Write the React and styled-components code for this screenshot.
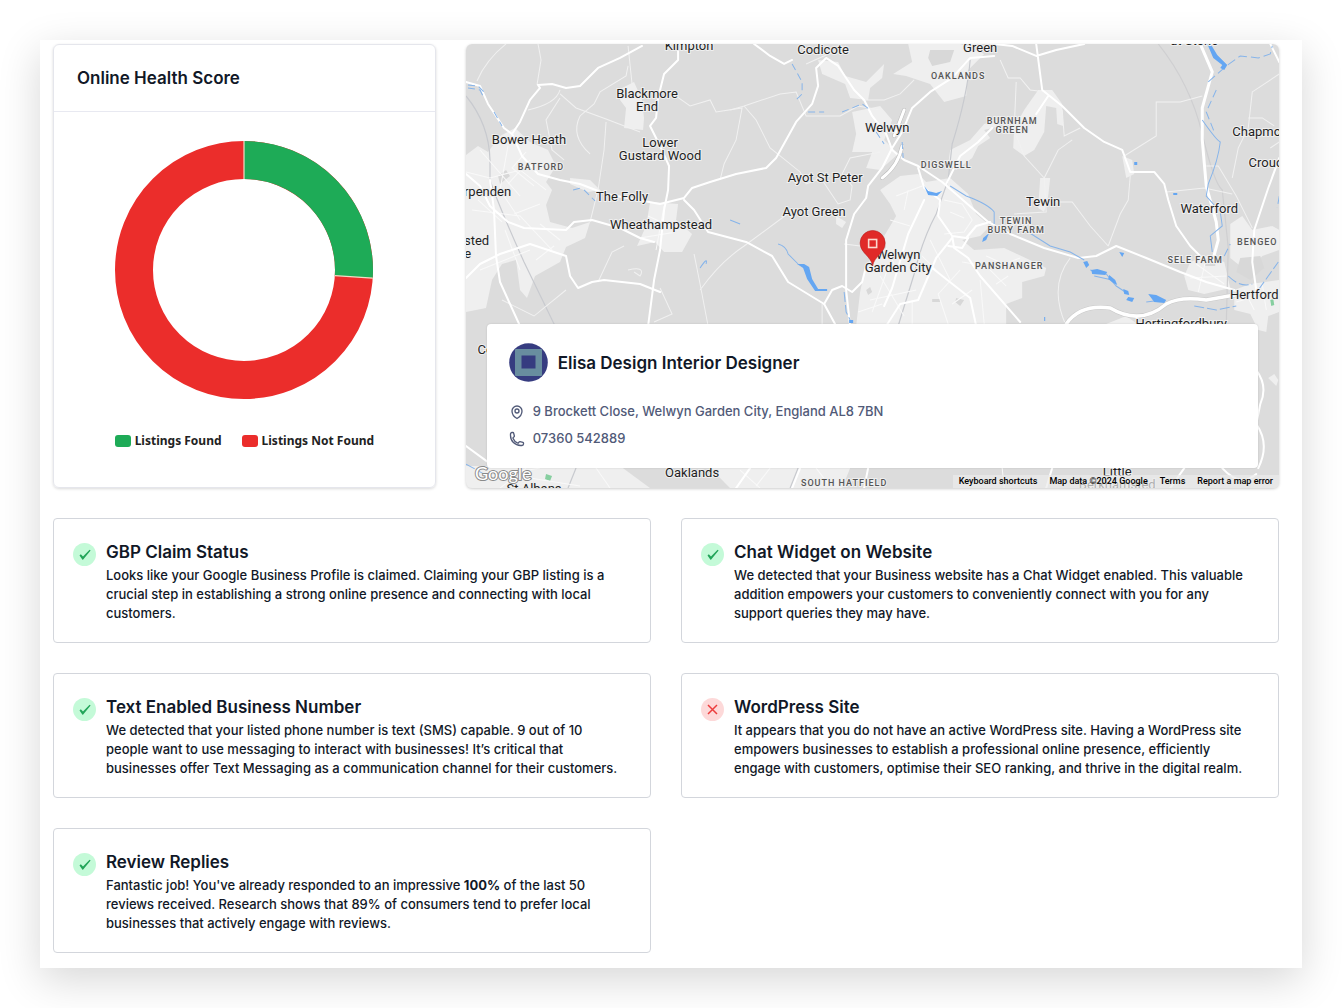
import styled, { createGlobalStyle } from 'styled-components';
import { HiOutlineMapPin, HiOutlinePhone } from 'react-icons/hi2';

const towns = [
  [689, 50, ['Kimpton']],
  [823, 54, ['Codicote']],
  [980, 52, ['Green']],
  [1194, 45, ['at Stone']],
  [647, 98, ['Blackmore', 'End']],
  [529, 144, ['Bower Heath']],
  [660, 147, ['Lower', 'Gustard Wood']],
  [887, 132, ['Welwyn']],
  [825, 182, ['Ayot St Peter']],
  [814, 216, ['Ayot Green']],
  [622, 201, ['The Folly']],
  [661, 229, ['Wheathampstead']],
  [484, 196, ['arpenden']],
  [473, 245, ['nsted']],
  [464, 258, ['ne']],
  [1043, 206, ['Tewin']],
  [1209, 213, ['Waterford']],
  [1262, 136, ['Chapmore']],
  [1269, 167, ['Crouch']],
  [1254, 299, ['Hertford']],
  [1181, 328, ['Hertingfordbury']],
  [898, 259, ['Welwyn', 'Garden City']],
  [487, 354, ['Col']],
  [692, 477, ['Oaklands']],
  [534, 493, ['St Albans']],
  [1117, 476, ['Little', 'Berkhamsted']],
];

const suburbs = [
  [958, 79, ['OAKLANDS']],
  [1012, 124, ['BURNHAM', 'GREEN']],
  [541, 170, ['BATFORD']],
  [946, 168, ['DIGSWELL']],
  [1016, 224, ['TEWIN', 'BURY FARM']],
  [1009, 269, ['PANSHANGER']],
  [1195, 263, ['SELE FARM']],
  [1257, 245, ['BENGEO']],
  [844, 486, ['SOUTH HATFIELD']],
];

const checks = [
  {
    title: 'GBP Claim Status',
    passed: true,
    text: 'Looks like your Google Business Profile is claimed. Claiming your GBP listing is a crucial step in establishing a strong online presence and connecting with local customers.',
  },
  {
    title: 'Chat Widget on Website',
    passed: true,
    text: 'We detected that your Business website has a Chat Widget enabled. This valuable addition empowers your customers to conveniently connect with you for any support queries they may have.',
  },
  {
    title: 'Text Enabled Business Number',
    passed: true,
    text: 'We detected that your listed phone number is text (SMS) capable. 9 out of 10 people want to use messaging to interact with businesses! It’s critical that businesses offer Text Messaging as a communication channel for their customers.',
  },
  {
    title: 'WordPress Site',
    passed: false,
    text: 'It appears that you do not have an active WordPress site. Having a WordPress site empowers businesses to establish a professional online presence, efficiently engage with customers, optimise their SEO ranking, and thrive in the digital realm.',
  },
  {
    title: 'Review Replies',
    passed: true,
    text: (
      <>
        Fantastic job! You've already responded to an impressive <strong>100%</strong> of the last
        50 reviews received. Research shows that 89% of consumers tend to prefer local businesses
        that actively engage with reviews.
      </>
    ),
  },
];

const Donut = ({ found }) => {
  const angle = found * 2 * Math.PI;
  const x = Math.sin(angle);
  const y = -Math.cos(angle);
  return (
    <DonutSvg viewBox='-130 -130 260 260' role='img' aria-label='Listings found and not found'>
      <circle r='110' fill='none' stroke='#eb2d2b' strokeWidth='38' />
      <path
        d={`M0 -110 A110 110 0 ${found > 0.5 ? 1 : 0} 1 ${110 * x} ${110 * y}`}
        fill='none'
        stroke='#1eab57'
        strokeWidth='38'
      />
      <path
        d={`M0 -91V-129M${91 * x} ${91 * y}L${129 * x} ${129 * y}`}
        stroke='#f3dcc4'
        strokeWidth='1.2'
      />
    </DonutSvg>
  );
};

const Labels = ({ items, lineHeight }) =>
  items.map(([x, y, lines]) => (
    <text key={lines[0] + y} x={x} y={y}>
      {lines.map((line, i) => (
        <tspan key={line} x={x} dy={i ? lineHeight : 0}>
          {line}
        </tspan>
      ))}
    </text>
  ));

const Map = () => (
  <MapSvg viewBox='466 44 813 444' preserveAspectRatio='xMidYMid slice' aria-label='Map'>
    <rect x='466' y='44' width='813' height='444' fill='#dcdcdc' />

    {/* built-up areas */}
    <g fill='#efefef'>
      <path d='M466 155L478 146L488 152L500 136L515 128L530 142L548 150L556 166L546 182L552 190L546 205L550 222L572 228L590 222L585 238L566 247L560 262L535 276L527 298L520 290L516 260L502 264L492 280L486 308L466 312Z' />
      <path d='M622 88L634 82L642 100L644 118L643 130L624 128L626 108L620 100Z' />
      <path d='M650 202L678 204L676 220L692 234L682 252L664 252L655 242L637 246L646 226Z' />
      <path d='M570 178L590 180L600 190L588 192L570 184Z' />
      <path d='M818 60L838 62L845 76L866 82L884 64L882 78L870 88L868 100L850 98L845 84L822 74Z' />
      <path d='M852 112L880 106L892 120L884 140L898 154L880 170L866 168L872 152L852 152L856 134Z' />
      <path d='M908 44L960 44L984 54L968 70L966 96L944 102L930 84L906 76L893 74L912 62Z' />
      <path d='M1038 90L1052 90L1062 104L1063 126L1057 124L1056 108L1046 106L1044 132L1034 150L1024 156L1013 148L1014 128L1024 110Z' />
      <path d='M1000 126L984 130L990 138L978 146L972 158L956 170L948 164L950 150L970 140L984 124L996 120Z' />
      <path d='M880 190L900 176L918 174L926 182L950 178L968 194L976 214L990 226L980 236L962 240L974 250L1004 248L1034 262L1046 268L1044 276L1022 282L1022 298L1006 304L1006 326H856L860 292L866 264L886 248L884 236L896 216L890 204Z' />
      <path d='M1040 178L1050 178L1048 196L1044 212L1038 208Z' />
      <path d='M1190 262L1206 256L1224 262L1230 288L1204 294L1188 290L1184 276Z' />
      <path d='M1230 224L1242 216L1252 230L1272 226L1279 230V250L1262 256L1254 266H1240L1230 258Z' />
      <path d='M1234 290L1250 284L1279 280V312L1268 316L1266 332L1258 330L1250 314L1234 310Z' />
      <path d='M466 466H620L650 488H466Z' />
      <path d='M710 468H850L842 488H730Z' />
      <path d='M1106 324L1126 316L1140 326Z' />
      <path d='M1122 156L1132 160L1134 174L1126 178Z' />
      <path d='M836 216L846 222L842 228L836 224Z' />
      <path d='M1268 378l6 -4 4 6 -2 6z' />
    </g>
    <g fill='#d8d8d8'>
      <path d='M498 176l8 -6 4 6 -10 8zM932 299h8v3h-8zM1205 258h10v8h-10zM956 298l8 2 -4 6 -5 -4zM866 290l4 -3 2 5 -4 3zM930 50h24l-4 12 -18 4 -4 -8z' />
      <path d='M1240 258l20 -2 4 12 -14 12 -14 -8z' />
    </g>
    <g fill='#87cfa0'>
      <path d='M546 474l6 2 -2 5 -5 -2zM1270 300l3 -1 1 6 -3 1z' />
    </g>

    {/* railways */}
    <g fill='none' stroke='#c8cacf' strokeWidth='1.2'>
      <path d='M466 96Q489 124 490 160L490 180Q498 204 524 262L555 326' />
      <path d='M970 60Q967 96 952 144L948 180L936 214Q922 240 914 274L898 326' />
      <path d='M1158 44Q1190 84 1202 134T1222 190L1228 248L1226 326' stroke='#cfcfd1' />
      <path d='M576 468L568 488M798 468L790 488' />
    </g>

    {/* lanes */}
    <g fill='none' stroke='#f1f1f1' strokeWidth='1'>
      <path d='M506 44Q486 60 477 81M538 44L541 60L537 85' />
      <path d='M560 94L576 108L606 119L640 132M528 110Q556 104 560 90M628 66L626 76L600 92L594 104L580 116Q570 136 590 154M560 98L546 120L552 150L564 160' />
      <path d='M606 122L604 150L598 190L590 222M628 46L632 84M670 92L690 106L710 100L716 112L742 108L736 140L724 164L720 180' />
      <path d='M730 110L744 106L756 120L770 148L780 156L800 172L806 184L822 178M744 106L780 94L796 92L806 116L840 116L858 106L880 110' />
      <path d='M862 100L884 100L900 94L914 80M806 64L846 46M822 180L830 192L838 204L850 200L852 186L842 174L850 158L880 152' />
      <path d='M1000 60L1008 78L1020 78L1030 90L1046 92M1016 82L1014 130L1024 156L1044 178M1062 110L1064 136L1080 128M1072 140L1058 150L1044 178L1046 212L1014 214' />
      <path d='M1044 202L1072 202L1090 226L1108 246M1124 156L1156 136L1156 102L1180 102L1202 96M1130 176L1128 200L1120 214L1108 246M1166 192L1204 188L1232 194' />
      <path d='M1206 166L1218 166L1236 196L1252 228M1279 74L1252 92L1248 128L1238 148L1232 178M1248 118L1262 118L1274 126M1270 148L1279 142' />
      <path d='M598 282L612 252L624 246M628 270Q646 266 640 276L634 272M660 288L672 314L654 322M694 254L700 284L708 326M700 290Q720 262 744 246L790 212' />
      <path d='M502 300L534 316L566 290M1070 258Q1048 286 1066 326M844 244L876 248M822 304V326' />
    </g>

    {/* residential streets */}
    <g fill='none' stroke='#f9f9f9' strokeWidth='1'>
      <path d='M466 172L490 178L520 170L546 190M480 150L520 196M508 146L500 190M472 210L520 216L552 250M480 270L530 250M505 230L520 270M560 240L540 224' />
      <path d='M500 190l20 30M530 160l-22 24M526 152l-14 16 22 18M514 214l26 -10M478 200l24 22M536 260l18 -14M648 216l30 14M640 238l36 -6M656 250l8 -44' />
      <path d='M870 300l46 -10M880 276l24 40M890 262l-18 50M858 312l24 -8M886 248l10 20M930 240l20 40M962 262l24 4 20 20' />
      <path d='M960 270l-22 24 10 30M972 290l-20 14M980 280l4 44M890 220l20 6M896 196l26 -10M904 210l4 -20M944 200l18 4 10 16 -8 12 -20 2M950 212l14 6M986 256l18 8 16 -6M996 284l12 -8M912 326V300M938 272l-16 -16' />
      <path d='M1196 264l28 20M1190 278l36 -2M1206 258l-8 34M1244 290l10 20M1236 302l34 -10M1262 284l4 26' />
      <path d='M480 478l60 -10M500 488l26 -20M530 478l50 8M596 468l14 20M740 470l20 18M770 468l-14 18M816 468l14 18M1002 468l2 20' />
    </g>

    {/* main roads */}
    <g fill='none' stroke='#fff' strokeWidth='2' strokeLinejoin='round' strokeLinecap='round'>
      <path d='M466 82L480 86L488 104L504 128L512 134L520 122L530 100L540 88L538 85L552 84L566 88L580 86L598 68L620 58L642 46' />
      <path d='M512 134L522 156L538 174L560 180L580 184L606 194L660 204L684 198L692 188L710 182L736 174L766 168L776 158L796 122L812 104L818 86L816 68L826 58L838 66L854 90L864 100L872 116L886 134L892 150L904 160L918 166L942 182L988 222' />
      <path d='M678 46L678 60L664 74L658 98L656 118L650 126L660 146L669 166L668 190L664 210L660 250L654 280L648 326' />
      <path d='M466 174L480 186L490 206L508 222L524 228L566 230L574 222L592 220L620 228L640 238L654 242M684 200L694 210L708 232L746 242L772 256L788 282L824 304L836 326' />
      <path d='M490 180L494 210L496 256L500 282L520 326M466 278L480 264L500 254L530 244L566 256L570 276L578 288L592 282L604 280L640 284L660 292' />
      <path d='M994 56L970 58L952 78L930 92L912 108L902 132L892 148L882 168L868 186L866 198L854 214L846 240L846 290L850 326' />
      <path d='M754 44L770 56L784 64L792 60M994 44L1012 46L1036 56L1056 50L1084 44M1036 44L1042 90L1062 106L1084 128L1104 142L1122 150L1130 172L1154 172L1164 184L1168 200L1176 226L1190 246L1202 258' />
      <path d='M1048 96L1036 114M992 128L978 142L960 156L946 184' />
      <path d='M1200 44L1212 72L1202 108L1202 140L1206 186L1216 222L1218 240L1212 262' strokeWidth='3' />
      <path d='M988 222L1010 234L1044 248L1078 258L1096 256L1116 246L1146 258L1180 272L1206 282L1234 290' />
      <path d='M1279 158L1268 188L1254 230L1252 262L1256 290' />
      <path d='M1270 44L1279 62' />
      <path d='M918 168L924 188L940 200L938 216L952 236L954 248L968 258L980 276L1020 322M952 236L966 238L976 226L990 222M948 246L962 248L968 238' />
      <path d='M924 200L908 234L892 288L884 306M952 238L936 258L924 286L918 300L900 304L886 326M932 268L970 298L976 326' />
      <path d='M824 304L832 290L842 286L852 292L862 282L866 266' />
      <path d='M1066 324Q1080 304 1110 308Q1140 326 1166 304Q1180 296 1206 300L1240 294' stroke='#c9c9c9' strokeWidth='4.500' />
      <path d='M1066 324Q1080 304 1110 308Q1140 326 1166 304Q1180 296 1206 300L1240 294' strokeWidth='3.500' />
      <path d='M466 446L488 462M1256 370Q1268 386 1260 404L1256 424Q1270 444 1258 468M1222 468Q1240 488 1256 474' />
      <path d='M750 468L736 488M800 468L792 488M868 468L864 488M1052 468L1046 488M1184 468L1170 488' />
      <path d='M904 110L894 136M902 146Q898 166 882 178' stroke='#bbb' strokeWidth='4' />
      <path d='M904 110L894 136M902 146Q898 166 882 178' strokeWidth='3' />
    </g>

    {/* water */}
    <g fill='none' stroke='#86b4ea' strokeWidth='1'>
      <path d='M468 85L478 86L486 94M468 88L480 90L484 98M494 112L502 126M573 190l8 -2M584 190l6 6 5 5M792 64L802 82L802 94L796 100M808 112h16M842 112l20 -8 8 6M876 132l8 12M902 142l1 16' strokeDasharray='7 4' />
      <path d='M778 244Q786 246 788 254L798 264M706 264Q708 256 700 268M730 220l10 4' />
      <path d='M1208 82L1226 66L1240 56L1258 58L1270 54L1272 46' strokeDasharray='9 4' />
      <path d='M1202 120Q1216 140 1220 142Q1218 160 1208 184L1206 196L1220 212L1222 226L1210 236L1212 252' />
      <path d='M1216 90L1206 112L1214 132M1224 256l6 -12M1279 196l-2 12' strokeDasharray='8 4' />
      <path d='M950 186L966 196Q988 204 994 212V224M1028 232L1050 246L1070 252L1084 260' />
      <path d='M1228 276Q1240 288 1252 284M1258 290L1268 276L1278 262M1194 306L1216 310L1236 306M466 464L484 474M844 292L846 312L850 320' strokeDasharray='10 3' />
      <path d='M1090 270L1106 274L1116 286L1128 294M1094 276L1112 280M1146 302L1162 300' />
    </g>
    <g fill='#64a6f2'>
      <path d='M797 264h7l5 3 3 12 6 10h9v2h-12l-8 -12 -4 -11z' />
      <path d='M1207 44l4 1 6 10 10 10 -3 5 -4 -2 2 -3 -9 -7z' />
      <path d='M924 186l4 5 8 2 6 -2 -5 5 -9 -1zM983 238l6 -5 -3 7 -4 2z' />
      <path d='M1083 262l4 -1 2 4 -3 3zM1091 270l6 -1 10 3 -2 3 -13 -1zM1109 275l6 5 2 5 -4 -2 -5 -4z' />
      <path d='M1123 289l5 2 1 4 -5 -1zM1128 297l6 1 -2 4 -6 -2zM1148 294l8 1 10 5 -2 3 -10 -1z' />
      <path d='M1119 252l5 1 -2 4zM1134 162h3v3h-3zM1173 193h4v2h-4zM849 320h4v3h-4zM1044 317h1v4h-1z' />
    </g>

    <Towns>
      <Labels items={towns} lineHeight={13} />
    </Towns>
    <Suburbs>
      <Labels items={suburbs} lineHeight={9} />
    </Suburbs>

    <path
      d='M872.500 266C871 256 860 253 860 243A12.500 12.500 0 0 1 885 243C885 253 874 256 872.500 266Z'
      fill='#e02a28'
      stroke='#b91f1f'
      strokeWidth='0.6'
    />
    <rect x='868.500' y='239.500' width='8' height='8' fill='none' stroke='#fbd9cf' strokeWidth='1.600' />

    <GoogleMark x='475' y='480'>
      Google
    </GoogleMark>
  </MapSvg>
);

const StatusIcon = ({ passed }) => (
  <Badge $passed={passed}>
    <svg width='23' height='23' viewBox='0 0 23 23' fill='none' aria-hidden='true'>
      {passed ? (
        <path d='M6.500 12.400L7.800 11.300L10 13.600L16.600 6.800L17.600 7.600L10.200 16.600Q9.700 17 9.300 16.500Z' fill='#22a559' />
      ) : (
        <path d='M7 7L16 16M16 7L7 16' stroke='#ec3d3d' strokeWidth='1.500' />
      )}
    </svg>
  </Badge>
);

const App = () => (
  <>
    <GlobalStyle />
    <Page>
      <Sheet>
        <Overview>
          <ScoreCard>
            <ScoreHeader>
              <Heading>Online Health Score</Heading>
            </ScoreHeader>
            <ScoreBody>
              <Donut found={0.26} />
              <Legend>
                <LegendItem $color='#1eab57'>Listings Found</LegendItem>
                <LegendItem $color='#eb2d2b'>Listings Not Found</LegendItem>
              </Legend>
            </ScoreBody>
          </ScoreCard>

          <MapCard>
            <Map />
            <MapFooter>
              <MapButton type='button'>Keyboard shortcuts</MapButton>
              <span>Map data ©2024 Google</span>
              <a href='#terms'>Terms</a>
              <a href='#report'>Report a map error</a>
            </MapFooter>
            <BusinessCard>
              <BusinessName>
                <svg width='39' height='39' viewBox='0 0 39 39' aria-hidden='true'>
                  <circle cx='19.500' cy='19.500' r='19.300' fill='#363c80' />
                  <rect x='6' y='6' width='27' height='27' rx='1' fill='#688d9f' />
                  <rect x='12.500' y='12.500' width='14' height='13' fill='#363c80' />
                </svg>
                <Heading>Elisa Design Interior Designer</Heading>
              </BusinessName>
              <Contact>
                <HiOutlineMapPin size={16} aria-hidden='true' />
                9 Brockett Close, Welwyn Garden City, England AL8 7BN
              </Contact>
              <Contact>
                <HiOutlinePhone size={16} aria-hidden='true' />
                07360 542889
              </Contact>
            </BusinessCard>
          </MapCard>
        </Overview>

        <Checks>
          {checks.map(({ title, passed, text }) => (
            <CheckCard key={title}>
              <StatusIcon passed={passed} />
              <div>
                <Heading>{title}</Heading>
                <CheckText>{text}</CheckText>
              </div>
            </CheckCard>
          ))}
        </Checks>
      </Sheet>
    </Page>
  </>
);

export default App;

const GlobalStyle = createGlobalStyle`
  * {
    box-sizing: border-box;
  }
  body {
    margin: 0;
    background: #fff;
    color: #111827;
    font-family: Inter, sans-serif;
    font-size: 13px;
    font-weight: 500;
  }
`;

const Page = styled.main`
  padding: 40px;
`;

const Sheet = styled.div`
  padding: 4px 23px 15px 13px;
  background: #fff;
  box-shadow: 0 12px 40px rgba(0, 0, 0, 0.16);
`;

const Overview = styled.section`
  display: grid;
  grid-template-columns: 8fr 17fr;
  gap: 30px;
  margin-bottom: 30px;
`;

const ScoreCard = styled.article`
  display: flex;
  flex-direction: column;
  border: 1px solid #e5e6ec;
  border-radius: 6px;
  box-shadow: 0 1px 3px rgba(0, 0, 0, 0.15);
`;

const ScoreHeader = styled.header`
  padding: 20px 23px;
  border-bottom: 1px solid #e8e9f1;
`;

const Heading = styled.h2`
  margin: 0;
  font-size: 17px;
  font-weight: 600;
  line-height: 26px;
`;

const ScoreBody = styled.div`
  display: flex;
  flex: 1;
  flex-direction: column;
  align-items: center;
  padding: 28px 20px;
`;

const DonutSvg = styled.svg`
  width: 260px;
  height: 260px;
`;

const Legend = styled.ul`
  display: flex;
  gap: 20px;
  margin: 31px 0 0;
  padding: 0;
  list-style: none;
`;

const LegendItem = styled.li`
  display: flex;
  align-items: center;
  gap: 4px;
  color: #222;
  font-family: 'Noto Sans', sans-serif;
  font-size: 12px;
  font-weight: 700;
  line-height: 20px;
  white-space: nowrap;

  &::before {
    content: '';
    width: 16px;
    height: 12px;
    border-radius: 3px;
    background: ${({ $color }) => $color};
  }
`;

const MapCard = styled.article`
  position: relative;
  min-height: 444px;
  overflow: hidden;
  border-radius: 6px;
  box-shadow: 0 1px 3px rgba(0, 0, 0, 0.2);
`;

const MapSvg = styled.svg`
  position: absolute;
  inset: 0;
  width: 100%;
  height: 100%;
`;

const Towns = styled.g`
  fill: #1f1f1f;
  stroke: #efefef;
  stroke-width: 2px;
  paint-order: stroke;
  font-family: Roboto, sans-serif;
  font-size: 13px;
  font-weight: 400;
  text-anchor: middle;
`;

const Suburbs = styled.g`
  fill: #555;
  stroke: #efefef;
  stroke-width: 2px;
  paint-order: stroke;
  font-family: Roboto, sans-serif;
  font-size: 9px;
  font-weight: 500;
  letter-spacing: 1px;
  text-anchor: middle;
`;

const GoogleMark = styled.text`
  fill: #fff;
  stroke: #8a8a8a;
  stroke-width: 2px;
  paint-order: stroke;
  font-family: Lato, sans-serif;
  font-size: 18px;
  font-weight: 400;
`;

const MapFooter = styled.footer`
  position: absolute;
  right: 0;
  bottom: 0;
  display: flex;
  gap: 12px;
  padding: 0 6px;
  background: rgba(235, 235, 235, 0.7);
  color: #000;
  font-family: Roboto, sans-serif;
  font-size: 9px;
  line-height: 13px;

  a {
    color: inherit;
    text-decoration: none;
  }
`;

const MapButton = styled.button`
  padding: 0;
  border: 0;
  background: none;
  color: inherit;
  font: inherit;
  cursor: pointer;
`;

const BusinessCard = styled.div`
  position: absolute;
  right: 21px;
  bottom: 20px;
  left: 21px;
  padding: 19px 22px 16px;
  border-radius: 4px;
  background: #fff;
  box-shadow: 0 0 2px rgba(0, 0, 0, 0.15);
`;

const BusinessName = styled.div`
  display: flex;
  align-items: center;
  gap: 10px;
  margin-bottom: 16px;
`;

const Contact = styled.p`
  display: flex;
  align-items: center;
  gap: 8px;
  margin: 0;
  color: #515a78;
  line-height: 27px;

  svg {
    stroke-width: 2;
  }
`;

const Checks = styled.section`
  display: grid;
  grid-template-columns: 1fr 1fr;
  gap: 30px;
`;

const CheckCard = styled.article`
  display: flex;
  gap: 10px;
  padding: 20px 24px 19px 19px;
  border: 1px solid #d3d6dc;
  border-radius: 4px;
`;

const Badge = styled.span`
  display: flex;
  flex: none;
  width: 23px;
  height: 23px;
  margin-top: 4px;
  border-radius: 50%;
  background: ${({ $passed }) => ($passed ? '#c4fad8' : '#fdd9d9')};
`;

const CheckText = styled.p`
  margin: 1px 0 0;
  line-height: 19px;
`;
